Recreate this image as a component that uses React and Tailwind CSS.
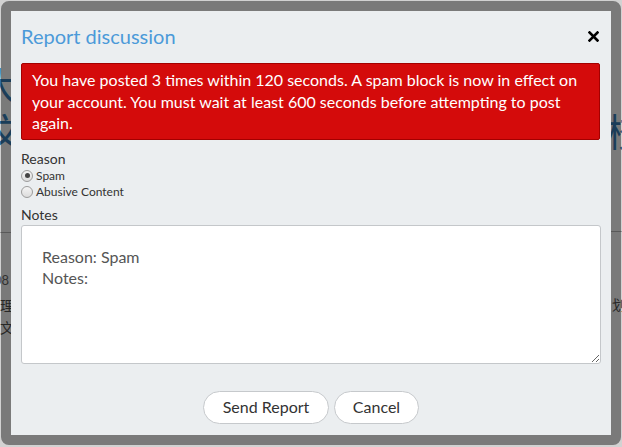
import React from 'react'

const font = { fontFamily: 'Lato, "Noto Sans CJK SC", sans-serif' }

function BackgroundPage() {
  // page behind the dialog, only its edges show through the frame
  return (
    <div className="flex h-full justify-between bg-[#d2d2d2] text-[#2f6a99]" aria-hidden="true">
      <div className="flex w-[14px] flex-col overflow-hidden">
        <div className="mt-[62px] text-[38px] leading-[46px] -ml-[20px]">大</div>
        <div className="text-[38px] leading-[46px] -ml-[14px]">文</div>
        <div className="mt-[78px] border-t border-[#9a9a9a]" />
        <div className="mt-[38px] text-[13px] text-[#555] -ml-[6px]">08</div>
        <div className="mt-[4px] text-[14px] leading-[22px] text-[#444]">理</div>
        <div className="text-[14px] leading-[22px] text-[#444]">文</div>
      </div>
      <div className="flex w-[14px] flex-col items-end overflow-hidden">
        <div className="mt-[108px] text-[38px] leading-[46px] -mr-[22px]">校</div>
        <div className="mt-[77px] w-full border-t border-[#9a9a9a]" />
        <div className="mt-[62px] text-[14px] text-[#444] -mr-[4px]">划</div>
      </div>
    </div>
  )
}

function Radio({ checked, label }) {
  return (
    <label className="flex h-[16px] items-center gap-[3px] text-[12px] text-[#333]">
      <span className="flex h-[12px] w-[12px] items-center justify-center rounded-full border border-[#9c9c9c] bg-gradient-to-b from-[#f4f4f4] to-[#dcdcdc]">
        {checked && <span className="h-[5px] w-[5px] rounded-full bg-[#444]" />}
      </span>
      {label}
    </label>
  )
}

export default function App() {
  return (
    <div className="relative h-[447px] w-[622px] overflow-hidden" style={font}>
      <BackgroundPage />

      {/* Dialog */}
      <div className="absolute left-[1px] top-[1px] h-[444px] w-[620px] rounded-[8px] border-[10px] border-[rgba(0,0,0,0.42)] bg-clip-padding">
        <div className="flex h-full flex-col bg-[#ebeef0] px-[10px] pt-[11px]">
          <div className="flex items-start justify-between">
            <h2 className="text-[20px] leading-[28px] text-[#4b9ad9]">Report discussion</h2>
            <button className="mr-[2px] mt-[9px]">
              <svg width="11" height="11" viewBox="0 0 11 11">
                <path d="M1.5 1.5 L9.5 9.5 M9.5 1.5 L1.5 9.5" stroke="#000" strokeWidth="2.6" strokeLinecap="square" />
              </svg>
            </button>
          </div>

          <div className="mt-[13px] mr-[1px] rounded-[2px] border border-[#a30000] bg-[#d40b0b] px-[10px] py-[5px] text-[16px] leading-[21.5px] text-white">
            You have posted 3 times within 120 seconds. A spam block is now in effect on your account. You must wait at least 600 seconds before attempting to post again.
          </div>

          <div className="mt-[10px] text-[14px] leading-[18px] text-[#333]">Reason</div>
          <Radio checked label="Spam" />
          <Radio label="Abusive Content" />

          <div className="mt-[6px] text-[14px] leading-[18px] text-[#333]">Notes</div>
          <textarea
            className="mt-[1px] h-[139px] w-[580px] rounded-[3px] border border-[#c4c7ca] bg-white px-[20px] pt-[20px] text-[16px] leading-[21px] text-[#555] outline-none"
            style={font}
            defaultValue={'Reason: Spam\nNotes:'}
          />

          <div className="mt-[27px] flex justify-center gap-[5px]">
            <button className="h-[33px] w-[126px] rounded-full border border-[#c6c9cc] bg-white text-[16px] text-[#333]">
              Send Report
            </button>
            <button className="h-[33px] w-[85px] rounded-full border border-[#c6c9cc] bg-white text-[16px] text-[#333]">
              Cancel
            </button>
          </div>
        </div>
      </div>
    </div>
  )
}
